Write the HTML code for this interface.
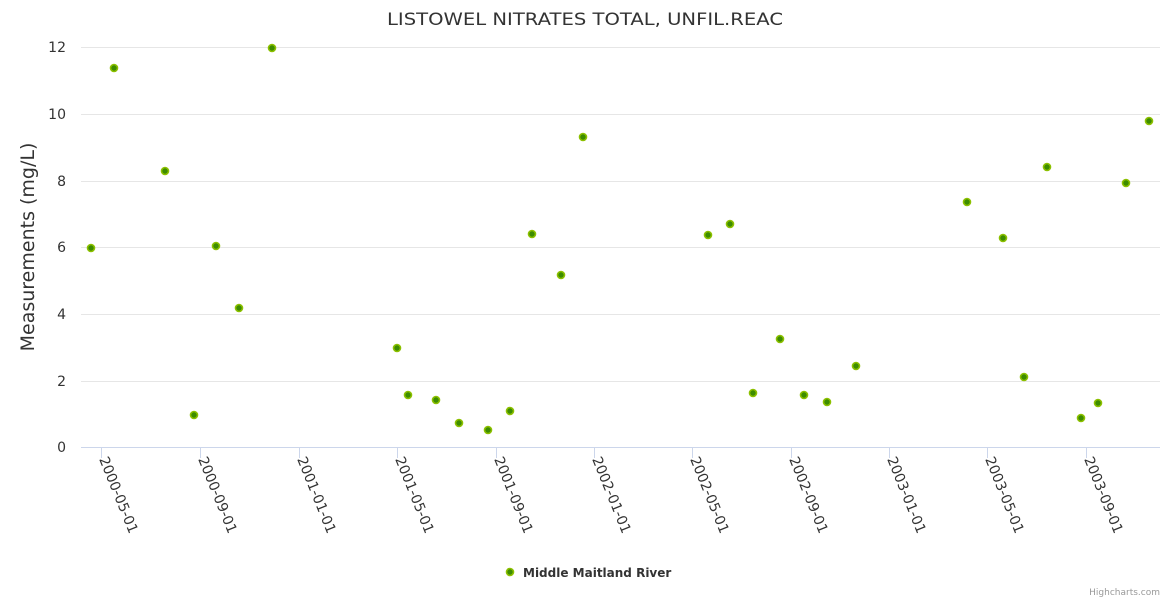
<!DOCTYPE html>
<html><head><meta charset="utf-8"><style>
html,body{margin:0;padding:0;background:#fff;}
svg{display:block;font-family:"DejaVu Sans","Liberation Sans",sans-serif;}
</style></head><body>
<svg width="1170" height="600" viewBox="0 0 1170 600" xmlns="http://www.w3.org/2000/svg">
<rect width="1170" height="600" fill="#fff"/>
<text x="585" y="25" text-anchor="middle" font-size="17" fill="#333" textLength="396" lengthAdjust="spacingAndGlyphs">LISTOWEL NITRATES TOTAL, UNFIL.REAC</text>
<g stroke="#e6e6e6" stroke-width="1">
<line x1="81" x2="1160" y1="47.5" y2="47.5"/>
<line x1="81" x2="1160" y1="114.5" y2="114.5"/>
<line x1="81" x2="1160" y1="181.5" y2="181.5"/>
<line x1="81" x2="1160" y1="247.5" y2="247.5"/>
<line x1="81" x2="1160" y1="314.5" y2="314.5"/>
<line x1="81" x2="1160" y1="381.5" y2="381.5"/>
</g>
<line x1="81" x2="1160" y1="447.5" y2="447.5" stroke="#ccd6eb"/>
<g font-size="14" fill="#333" text-anchor="end">
<text x="66" y="52">12</text><text x="66" y="119">10</text><text x="66" y="186">8</text>
<text x="66" y="252">6</text><text x="66" y="319">4</text><text x="66" y="386">2</text><text x="66" y="452">0</text>
</g>
<text transform="translate(34,247) rotate(-90)" text-anchor="middle" font-size="19" fill="#333">Measurements (mg/L)</text>
<g stroke="#ccd6eb">
<line x1="101.5" x2="101.5" y1="448" y2="458"/><line x1="200.5" x2="200.5" y1="448" y2="458"/>
<line x1="299.5" x2="299.5" y1="448" y2="458"/><line x1="397.5" x2="397.5" y1="448" y2="458"/>
<line x1="496.5" x2="496.5" y1="448" y2="458"/><line x1="594.5" x2="594.5" y1="448" y2="458"/>
<line x1="692.5" x2="692.5" y1="448" y2="458"/><line x1="791.5" x2="791.5" y1="448" y2="458"/>
<line x1="889.5" x2="889.5" y1="448" y2="458"/><line x1="987.5" x2="987.5" y1="448" y2="458"/>
<line x1="1086.5" x2="1086.5" y1="448" y2="458"/>
</g>
<g font-size="14" fill="#333">
<text transform="translate(99,459) rotate(68)">2000-05-01</text>
<text transform="translate(198,459) rotate(68)">2000-09-01</text>
<text transform="translate(297,459) rotate(68)">2001-01-01</text>
<text transform="translate(395,459) rotate(68)">2001-05-01</text>
<text transform="translate(494,459) rotate(68)">2001-09-01</text>
<text transform="translate(592,459) rotate(68)">2002-01-01</text>
<text transform="translate(690,459) rotate(68)">2002-05-01</text>
<text transform="translate(789,459) rotate(68)">2002-09-01</text>
<text transform="translate(887,459) rotate(68)">2003-01-01</text>
<text transform="translate(985,459) rotate(68)">2003-05-01</text>
<text transform="translate(1084,459) rotate(68)">2003-09-01</text>
</g>
<g fill="#3d8c00" stroke="#8cc000" stroke-width="1.6">
<circle cx="91" cy="248" r="3.5"/><circle cx="114" cy="68" r="3.5"/><circle cx="165" cy="171" r="3.5"/>
<circle cx="194" cy="415" r="3.5"/><circle cx="216" cy="246" r="3.5"/><circle cx="239" cy="308" r="3.5"/>
<circle cx="272" cy="48" r="3.5"/><circle cx="397" cy="348" r="3.5"/><circle cx="408" cy="395" r="3.5"/>
<circle cx="436" cy="400" r="3.5"/><circle cx="459" cy="423" r="3.5"/><circle cx="488" cy="430" r="3.5"/>
<circle cx="510" cy="411" r="3.5"/><circle cx="532" cy="234" r="3.5"/><circle cx="561" cy="275" r="3.5"/>
<circle cx="583" cy="137" r="3.5"/><circle cx="708" cy="235" r="3.5"/><circle cx="730" cy="224" r="3.5"/>
<circle cx="753" cy="393" r="3.5"/><circle cx="780" cy="339" r="3.5"/><circle cx="804" cy="395" r="3.5"/>
<circle cx="827" cy="402" r="3.5"/><circle cx="856" cy="366" r="3.5"/><circle cx="967" cy="202" r="3.5"/>
<circle cx="1003" cy="238" r="3.5"/><circle cx="1024" cy="377" r="3.5"/><circle cx="1047" cy="167" r="3.5"/>
<circle cx="1081" cy="418" r="3.5"/><circle cx="1098" cy="403" r="3.5"/><circle cx="1126" cy="183" r="3.5"/>
<circle cx="1149" cy="121" r="3.5"/>
</g>
<circle cx="510" cy="572" r="3.5" fill="#3d8c00" stroke="#8cc000" stroke-width="1.6"/>
<text x="523" y="577" font-size="12" font-weight="bold" fill="#333">Middle Maitland River</text>
<text x="1160" y="595" text-anchor="end" font-size="9" fill="#999">Highcharts.com</text>
</svg>
</body></html>
